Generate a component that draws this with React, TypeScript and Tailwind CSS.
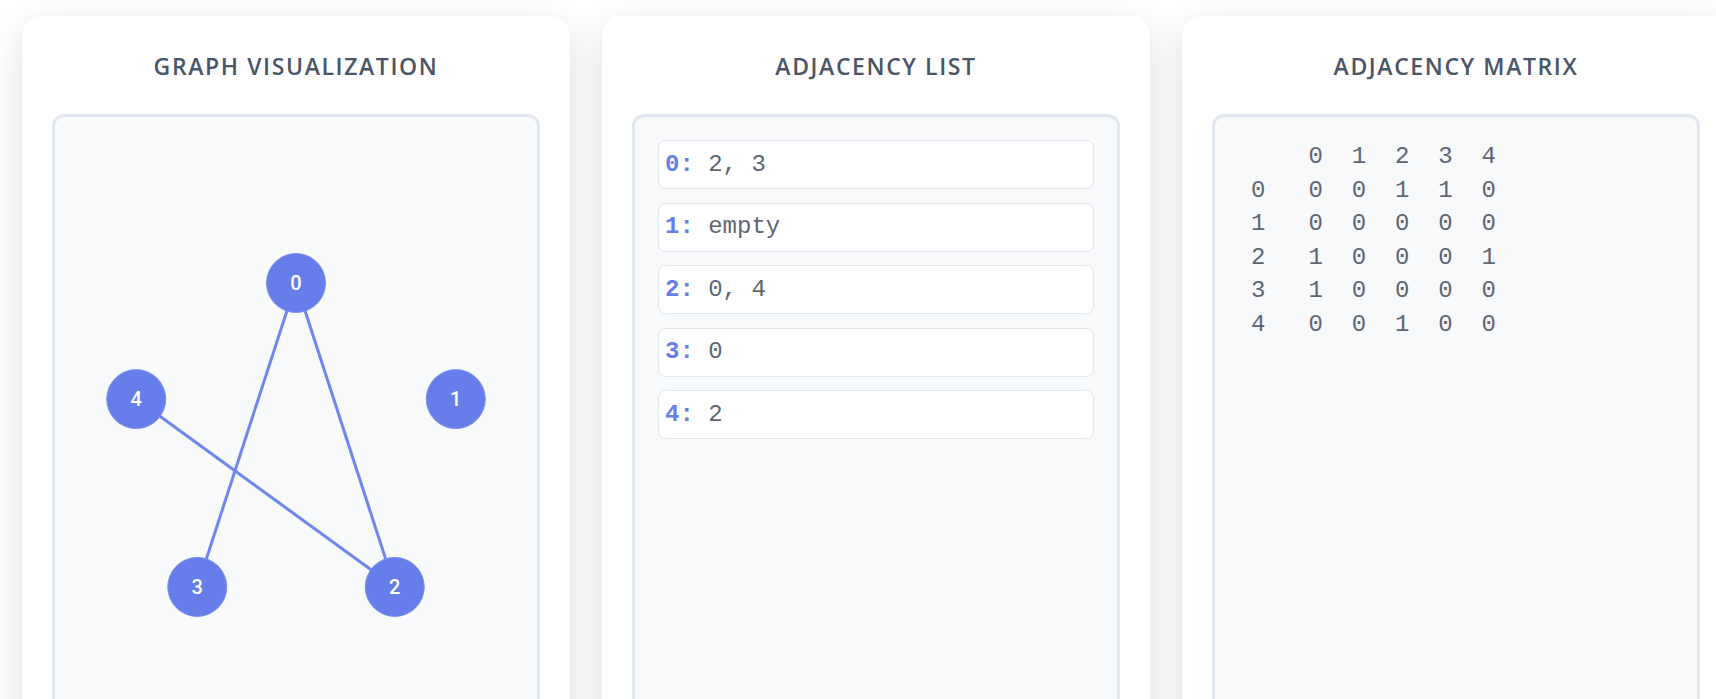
import React from "react";

const edges: [number, number][] = [
  [0, 2],
  [0, 3],
  [2, 4],
];

const adjacency: number[][] = [[2, 3], [], [0, 4], [0], [2]];

const matrix = [
  [0, 0, 1, 1, 0],
  [0, 0, 0, 0, 0],
  [1, 0, 0, 0, 1],
  [1, 0, 0, 0, 0],
  [0, 0, 1, 0, 0],
];

const mono = "font-['Courier_New','Liberation_Mono',monospace]";

// nodes sit on a pentagon, node 0 on top
const CX = 241;
const CY = 334;
const R = 168;
const nodes = [0, 1, 2, 3, 4].map((i) => {
  const a = ((-90 + 72 * i) * Math.PI) / 180;
  return { id: i, x: CX + R * Math.cos(a), y: CY + R * Math.sin(a) };
});

function Card({ title, children }: { title: string; children: React.ReactNode }) {
  return (
    <section className="w-[548px] shrink-0 rounded-[20px] bg-white px-[30px] pt-[30px] pb-[30px] shadow-[0_10px_40px_rgba(0,0,0,0.12)]">
      <h2 className="mb-[28px] text-center font-['Open_Sans',sans-serif] text-[23px] leading-[40px] font-semibold tracking-[1.6px] text-[#4a5568] uppercase">
        {title}
      </h2>
      {children}
    </section>
  );
}

function GraphView() {
  return (
    <div className="h-[720px] rounded-[12px] border-[3px] border-[#e2e8f0] bg-[#f9fafc]">
      <svg width="482" height="714" className="block">
        {edges.map(([a, b]) => (
          <line
            key={`${a}-${b}`}
            x1={nodes[a].x}
            y1={nodes[a].y}
            x2={nodes[b].x}
            y2={nodes[b].y}
            stroke="#6f86ee"
            strokeWidth={3}
          />
        ))}
        {nodes.map((n) => (
          <g key={n.id}>
            <circle cx={n.x} cy={n.y} r={29.5} fill="#667eea" stroke="#7b8ff0" strokeWidth={1} />
            <text
              x={n.x}
              y={n.y + 7}
              textAnchor="middle"
              fill="#ffffff"
              fontSize={20}
              fontWeight={500}
              fontFamily="Roboto, 'Liberation Sans', sans-serif"
            >
              {n.id}
            </text>
          </g>
        ))}
      </svg>
    </div>
  );
}

function ListView() {
  return (
    <div className="flex h-[720px] flex-col gap-[13.6px] rounded-[12px] border-[3px] border-[#e2e8f0] bg-[#f7f9fb] p-[23px]">
      {adjacency.map((nbrs, i) => (
        <div
          key={i}
          className={`flex h-[49px] items-center rounded-[8px] border border-[#e2e8f0] bg-white px-[6px] ${mono} text-[24px] leading-[33.6px] whitespace-pre`}
        >
          <span className="font-bold text-[#667eea]">{i}:</span>
          <span className="text-[#5f6673]"> {nbrs.length ? nbrs.join(", ") : "empty"}</span>
        </div>
      ))}
    </div>
  );
}

function MatrixView() {
  const header = "    " + matrix.map((_, i) => i).join("  ");
  const rows = matrix.map((row, i) => `${i}   ${row.join("  ")}`);
  return (
    <div className="h-[720px] rounded-[12px] border-[3px] border-[#e2e8f0] bg-[#f7f9fb] py-[23px] pl-[36px] pr-[23px]">
      <pre className={`${mono} text-[24px] leading-[33.6px] text-[#5f6673]`}>
        {[header, ...rows].join("\n")}
      </pre>
    </div>
  );
}

export default function App() {
  return (
    <div className="h-screen w-full overflow-hidden bg-white">
      <div className="flex gap-[32px] pt-[16px] pl-[22px]">
        <Card title="Graph Visualization">
          <GraphView />
        </Card>
        <Card title="Adjacency List">
          <ListView />
        </Card>
        <Card title="Adjacency Matrix">
          <MatrixView />
        </Card>
      </div>
    </div>
  );
}
